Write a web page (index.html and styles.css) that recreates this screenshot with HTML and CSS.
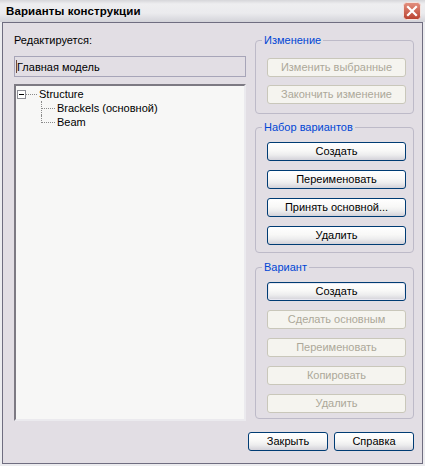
FILE: index.html
```html
<!DOCTYPE html>
<html lang="ru">
<head>
<meta charset="utf-8">
<title>Варианты конструкции</title>
<link rel="stylesheet" href="styles.css">
</head>
<body>
<div class="window">
  <div class="titlebar">
    <span class="title">Варианты конструкции</span>
    <svg class="close" viewBox="0 0 18 18" aria-label="Закрыть">
      <defs>
        <linearGradient id="cg" x1="0" y1="0" x2="0" y2="1">
          <stop offset="0" stop-color="#e3907f"/>
          <stop offset="1" stop-color="#b9412f"/>
        </linearGradient>
      </defs>
      <rect x="0.5" y="0.5" width="17" height="17" rx="3" fill="url(#cg)" stroke="#f4e2de"/>
      <path d="M5 5L13 13M13 5L5 13" stroke="#fff" stroke-width="2.2" stroke-linecap="square"/>
    </svg>
  </div>
  <div class="client">
    <div class="main">
      <div class="left">
        <div class="label">Редактируется:</div>
        <div class="field"><span class="caret"></span>Главная модель</div>
        <div class="tree">
          <div class="row root">
            <span class="box"><span class="minus"></span></span><span class="hline"></span><span class="item">Structure</span>
          </div>
          <div class="row child">
            <span class="conn"><span class="hl"></span></span><span class="item">Brackels (основной)</span>
          </div>
          <div class="row child">
            <span class="conn last"></span><span class="item">Beam</span>
          </div>
        </div>
      </div>
      <div class="right">
        <fieldset class="group g1">
          <legend>Изменение</legend>
          <div class="btns">
            <button class="btn" disabled>Изменить выбранные</button>
            <button class="btn" disabled>Закончить изменение</button>
          </div>
        </fieldset>
        <fieldset class="group g2">
          <legend>Набор вариантов</legend>
          <div class="btns">
            <button class="btn">Создать</button>
            <button class="btn">Переименовать</button>
            <button class="btn">Принять основной...</button>
            <button class="btn">Удалить</button>
          </div>
        </fieldset>
        <fieldset class="group g3">
          <legend>Вариант</legend>
          <div class="btns">
            <button class="btn focus">Создать</button>
            <button class="btn" disabled>Сделать основным</button>
            <button class="btn" disabled>Переименовать</button>
            <button class="btn" disabled>Копировать</button>
            <button class="btn" disabled>Удалить</button>
          </div>
        </fieldset>
      </div>
    </div>
    <div class="footer">
      <button class="btn small">Закрыть</button>
      <button class="btn small">Справка</button>
    </div>
  </div>
</div>
</body>
</html>
```
FILE: styles.css
```css
* { box-sizing: border-box; }
html, body { margin: 0; padding: 0; }
body {
  font-family: "Liberation Sans", Arial, sans-serif;
  font-size: 11px;
  color: #000;
  background: #eeeef0;
}
.window {
  width: 425px;
  height: 466px;
  background: #ececef;
}
.titlebar {
  height: 22px;
  display: flex;
  align-items: center;
  justify-content: space-between;
  padding: 0 4px 0 6px;
  background: linear-gradient(#d6d6da 0, #eeeef0 18%, #ebebee 60%, #d3d3d9 100%);
}
.title {
  font-weight: bold;
  font-size: 11.5px;
  letter-spacing: 0.1px;
}
.close { width: 18px; height: 18px; display: block; }
.client {
  margin: 0 2px;
  height: 442px;
  border: 1px solid #6f6d80;
  background: #e2dee4;
  display: flex;
  flex-direction: column;
  padding: 11px 8px 0 11px;
}
.main {
  flex: 1;
  display: flex;
  gap: 9px;
  min-height: 0;
}
.left {
  width: 232px;
  display: flex;
  flex-direction: column;
}
.label { line-height: 13px; height: 13px; }
.field {
  margin-top: 9px;
  height: 21px;
  border: 1px solid #a7a5b8;
  display: flex;
  align-items: center;
  padding-left: 1px;
}
.caret {
  width: 1px;
  height: 13px;
  background: #6b4a3e;
  margin-right: 0;
}
.tree {
  margin-top: 7px;
  flex: 1;
  background: #f7f7f6;
  border: 2px solid;
  border-color: #7d7a83 #ebeaee #ebeaee #7d7a83;
  padding-top: 1px;
}
.row {
  height: 14px;
  display: flex;
  align-items: center;
}
.root { padding-left: 1px; }
.box {
  width: 9px;
  height: 9px;
  border: 1px solid #8e8e96;
  background: #fff;
  display: flex;
  align-items: center;
  justify-content: center;
}
.minus { width: 5px; height: 1px; background: #000; }
.hline {
  width: 11px;
  border-top: 1px dotted #8a8a8a;
  margin-right: 2px;
}
.child { padding-left: 25px; align-items: stretch; }
.conn {
  width: 14px;
  border-left: 1px dotted #8a8a8a;
  margin-right: 2px;
  display: flex;
  align-items: center;
}
.conn .hl { width: 13px; border-top: 1px dotted #8a8a8a; }
.conn.last {
  height: 8px;
  border-bottom: 1px dotted #8a8a8a;
}
.item { line-height: 14px; white-space: nowrap; }
.right {
  width: 159px;
  display: flex;
  flex-direction: column;
}
.group {
  margin: 0;
  padding: 0;
  min-width: 0;
  border: 1px solid #bdbac8;
  border-radius: 4px;
}
.group legend {
  margin-left: 6px;
  padding: 0 2px;
  line-height: 13px;
  color: #0046d5;
}
.btns {
  display: flex;
  flex-direction: column;
  padding-left: 11px;
}
.g1 .btns { padding-top: 11px; padding-bottom: 9px; gap: 8px; }
.g2 { margin-top: 7px; }
.g2 .btns { padding-top: 8px; padding-bottom: 7px; gap: 9px; }
.g3 { margin-top: 8px; }
.g3 .btns { padding-top: 8px; padding-bottom: 5px; gap: 9px; }
.btn {
  width: 139px;
  height: 19px;
  margin: 0;
  padding: 0;
  font-family: "Liberation Sans", Arial, sans-serif;
  font-size: 11px;
  line-height: 17px;
  color: #000;
  border: 1px solid #003c74;
  border-radius: 3px;
  background: linear-gradient(#ffffff 0%, #f8f8f7 45%, #ededee 70%, #d3d2d9 100%);
  text-align: center;
}
.btn.focus {
  box-shadow: inset 0 0 0 1px #e9e8f0;
}
.btn:disabled {
  color: #aca899;
  border-color: #c9c7ba;
  background: #f5f4ef;
}
.footer {
  display: flex;
  justify-content: flex-end;
  gap: 6px;
  padding: 11px 0 12px;
}
.btn.small { width: 80px; }
```
